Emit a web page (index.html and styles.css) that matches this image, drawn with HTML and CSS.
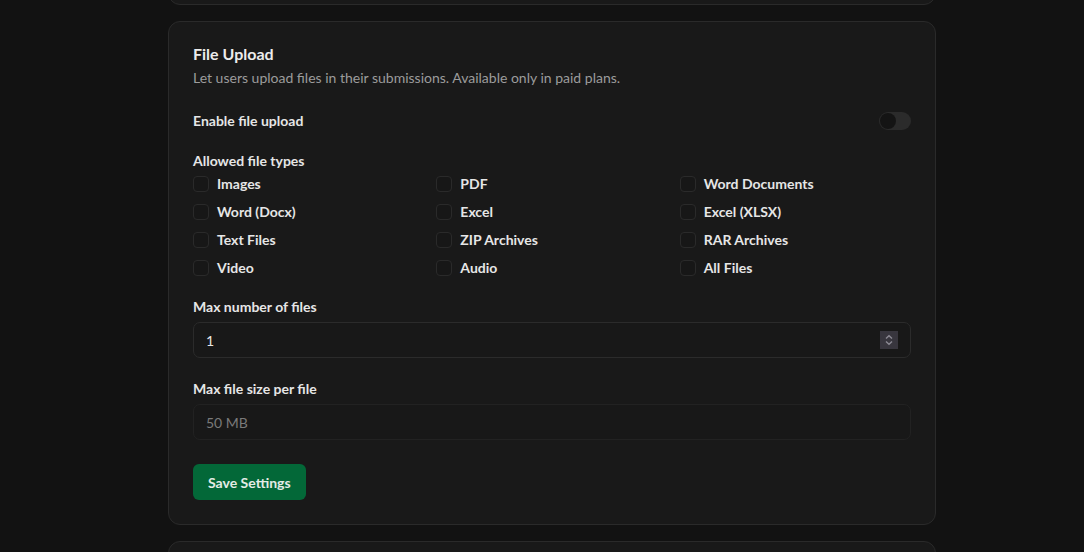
FILE: index.html
```html
<!DOCTYPE html>
<html lang="en">
<head>
<meta charset="utf-8">
<title>File Upload Settings</title>
<link rel="stylesheet" href="styles.css">
</head>
<body>
<main class="main">
<div class="page">
  <div class="card card-prev"></div>
  <section class="card card-main">
    <h2 class="card-title">File Upload</h2>
    <p class="card-desc">Let users upload files in their submissions. Available only in paid plans.</p>

    <div class="toggle-row">
      <span class="label">Enable file upload</span>
      <span class="toggle"><span class="thumb"></span></span>
    </div>

    <div class="field types">
      <div class="label">Allowed file types</div>
      <div class="type-grid">
        <label class="check"><span class="box"></span>Images</label>
        <label class="check"><span class="box"></span>PDF</label>
        <label class="check"><span class="box"></span>Word Documents</label>
        <label class="check"><span class="box"></span>Word (Docx)</label>
        <label class="check"><span class="box"></span>Excel</label>
        <label class="check"><span class="box"></span>Excel (XLSX)</label>
        <label class="check"><span class="box"></span>Text Files</label>
        <label class="check"><span class="box"></span>ZIP Archives</label>
        <label class="check"><span class="box"></span>RAR Archives</label>
        <label class="check"><span class="box"></span>Video</label>
        <label class="check"><span class="box"></span>Audio</label>
        <label class="check"><span class="box"></span>All Files</label>
      </div>
    </div>

    <div class="field">
      <div class="label">Max number of files</div>
      <div class="input">
        <span class="value">1</span>
        <span class="spinner">
          <svg width="18" height="18" viewBox="0 0 18 18" fill="none" stroke="#8c8a94" stroke-width="1.4">
            <path d="M6 7.5 L9 4.8 L12 7.5"/>
            <path d="M6 10.5 L9 13.2 L12 10.5"/>
          </svg>
        </span>
      </div>
    </div>

    <div class="field">
      <div class="label">Max file size per file</div>
      <div class="input input-disabled">
        <span class="placeholder">50 MB</span>
      </div>
    </div>

    <button class="btn">Save Settings</button>
  </section>
  <div class="card card-next"></div>
</div>
</main>
</body>
</html>
```

FILE: styles.css
```css
* { box-sizing: border-box; }

html, body {
  margin: 0;
  padding: 0;
  background: #121212;
  height: 552px;
  overflow: hidden;
}

body {
  font-family: Lato, "Noto Sans", sans-serif;
  color: #e8e8e8;
}

.main {
  padding-left: 20px;
}

.page {
  width: 768px;
  margin: -46px auto 0;
  display: flex;
  flex-direction: column;
  gap: 16px;
}

.card {
  background: #191919;
  border: 1px solid #2a2a2a;
  border-radius: 12px;
  padding: 24px;
}

.card-main {
  padding-top: 22px;
}

.card-prev { height: 51px; }
.card-next { height: 60px; }

.card-title {
  margin: 0;
  font-size: 16px;
  font-weight: 700;
  line-height: 20px;
  color: #ececec;
}

.card-desc {
  margin: 4px 0 0;
  font-size: 14px;
  line-height: 20px;
  color: #9c9c9c;
}

.label {
  font-size: 14px;
  font-weight: 700;
  line-height: 18px;
  color: #e6e6e6;
}

.toggle-row {
  margin-top: 24px;
  display: flex;
  align-items: center;
  justify-content: space-between;
  height: 18px;
}

.toggle {
  width: 32px;
  height: 18px;
  border-radius: 9px;
  background: #2b2b2b;
  padding: 1px;
  display: flex;
}

.thumb {
  width: 16px;
  height: 16px;
  border-radius: 50%;
  background: #141414;
}

.field { margin-top: 22px; }

.type-grid {
  margin-top: 6px;
  display: grid;
  grid-template-columns: repeat(3, 1fr);
  column-gap: 12px;
  row-gap: 12px;
}

.check {
  display: flex;
  align-items: center;
  gap: 8px;
  font-size: 14px;
  font-weight: 700;
  line-height: 16px;
  color: #e6e6e6;
}

.box {
  width: 16px;
  height: 16px;
  border: 1px solid #2a2a2a;
  border-radius: 4px;
  background: #171717;
  flex: none;
}

.input {
  margin-top: 6px;
  height: 36px;
  border: 1px solid #2b2b2b;
  border-radius: 7px;
  background: #181818;
  display: flex;
  align-items: center;
  justify-content: space-between;
  padding: 0 12px;
  font-size: 14px;
}

.value { color: #e6e6e6; }

.spinner {
  width: 18px;
  height: 18px;
  background: #38363e;
  display: flex;
}

.input-disabled {
  border-color: #222222;
}

.placeholder { color: #7a7a7a; }

.btn {
  display: block;
  margin-top: 24px;
  height: 36px;
  padding: 0 15px;
  border: none;
  border-radius: 6px;
  background: #036838;
  color: #e4ece6;
  font-family: Lato, "Noto Sans", sans-serif;
  font-size: 14px;
  font-weight: 700;
}
```
